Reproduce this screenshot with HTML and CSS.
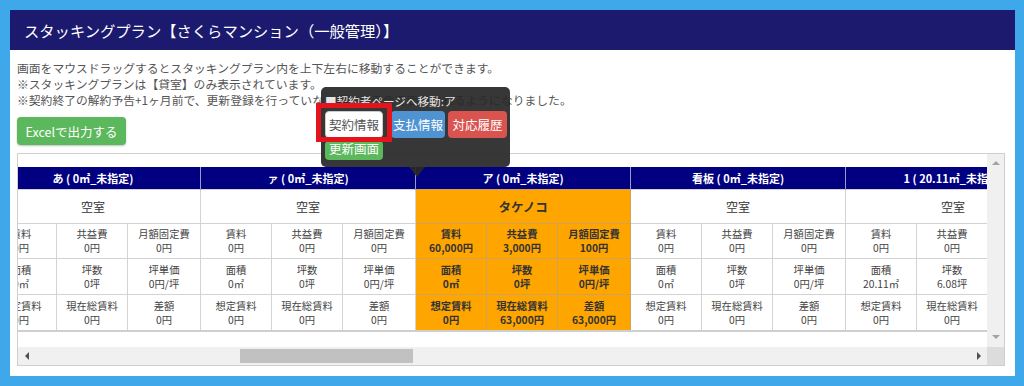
FILE: index.html
```html
<!DOCTYPE html>
<html lang="ja">
<head>
  <meta charset="UTF-8">
  <title>スタッキングプラン</title>
  <link rel="stylesheet" href="styles.css">
</head>
<body>
  <div class="panel">
    <div class="panel-head">スタッキングプラン【さくらマンション（一般管理）】</div>
    <div class="panel-body">
      <div class="notes">
        <p>画面をマウスドラッグするとスタッキングプラン内を上下左右に移動することができます。</p>
        <p>※スタッキングプランは【貸室】のみ表示されています。</p>
        <p>※契約終了の解約予告+1ヶ月前で、更新登録を行っていない契約は赤色で表示されるようになりました。</p>
      </div>
      <button class="excel-btn">Excelで出力する</button>

      <div class="plan-box">
        <div class="plan-view">
          <table class="plan">
            <colgroup>
              <col><col><col><col><col><col><col><col><col><col><col><col><col><col><col>
            </colgroup>
            <tr class="room-head">
              <th colspan="3">あ ( 0㎡_未指定)</th>
              <th colspan="3">ァ ( 0㎡_未指定)</th>
              <th colspan="3">ア ( 0㎡_未指定)</th>
              <th colspan="3">看板 ( 0㎡_未指定)</th>
              <th colspan="3">1 ( 20.11㎡_未指定)</th>
            </tr>
            <tr class="status-row">
              <td colspan="3">空室</td>
              <td colspan="3">空室</td>
              <td colspan="3" class="occupied tenant">タケノコ</td>
              <td colspan="3">空室</td>
              <td colspan="3">空室</td>
            </tr>
            <tr class="row-a">
              <td>賃料<br>0円</td><td>共益費<br>0円</td><td>月額固定費<br>0円</td>
              <td>賃料<br>0円</td><td>共益費<br>0円</td><td>月額固定費<br>0円</td>
              <td class="occupied">賃料<br>60,000円</td><td class="occupied">共益費<br>3,000円</td><td class="occupied">月額固定費<br>100円</td>
              <td>賃料<br>0円</td><td>共益費<br>0円</td><td>月額固定費<br>0円</td>
              <td>賃料<br>0円</td><td>共益費<br>0円</td><td>月額固定費<br>0円</td>
            </tr>
            <tr class="row-b">
              <td>面積<br>0㎡</td><td>坪数<br>0坪</td><td>坪単価<br>0円/坪</td>
              <td>面積<br>0㎡</td><td>坪数<br>0坪</td><td>坪単価<br>0円/坪</td>
              <td class="occupied">面積<br>0㎡</td><td class="occupied">坪数<br>0坪</td><td class="occupied">坪単価<br>0円/坪</td>
              <td>面積<br>0㎡</td><td>坪数<br>0坪</td><td>坪単価<br>0円/坪</td>
              <td>面積<br>20.11㎡</td><td>坪数<br>6.08坪</td><td>坪単価<br>0円/坪</td>
            </tr>
            <tr class="row-b">
              <td>想定賃料<br>0円</td><td>現在総賃料<br>0円</td><td>差額<br>0円</td>
              <td>想定賃料<br>0円</td><td>現在総賃料<br>0円</td><td>差額<br>0円</td>
              <td class="occupied">想定賃料<br>0円</td><td class="occupied">現在総賃料<br>63,000円</td><td class="occupied">差額<br>63,000円</td>
              <td>想定賃料<br>0円</td><td>現在総賃料<br>0円</td><td>差額<br>0円</td>
              <td>想定賃料<br>0円</td><td>現在総賃料<br>0円</td><td>差額<br>0円</td>
            </tr>
          </table>
        </div>
        <div class="vbar">
          <span class="arrow-up"></span>
          <span class="arrow-down"></span>
        </div>
        <div class="hbar">
          <span class="arrow-left"></span>
          <div class="htrack"><div class="hthumb"></div></div>
          <span class="arrow-right"></span>
        </div>
        <div class="corner"></div>
      </div>

      <div class="popover">
        <div class="popover-title">■契約者ページへ移動:ア</div>
        <div class="popover-btns">
          <button class="pbtn pbtn-default">契約情報</button>
          <button class="pbtn pbtn-info">支払情報</button>
          <button class="pbtn pbtn-danger">対応履歴</button>
          <button class="pbtn pbtn-success pbtn-xs">更新画面</button>
        </div>
        <span class="popover-arrow"></span>
      </div>
      <div class="highlight"></div>
    </div>
  </div>
</body>
</html>
```

FILE: styles.css
```css
html, body {
  margin: 0;
  height: 386px;
  overflow: hidden;
}
body {
  font-family: "Noto Sans CJK JP", sans-serif;
  background-color: #3EA8EA;
  padding: 10px 9px 10px 10px;
  box-sizing: border-box;
  color: #555;
}
.panel {
  background-color: #FFFFFF;
  height: 366px;
}
.panel-head {
  background-color: #1B1A6F;
  color: #FFFFFF;
  height: 40px;
  line-height: 40px;
  padding-left: 14px;
  font-size: 15.3px;
}
.panel-body {
  position: relative;
  padding: 10px 10px 0 7px;
}
.notes p {
  margin: 0;
  font-size: 11.8px;
  line-height: 16px;
  color: #555;
}
.excel-btn {
  display: block;
  margin-top: 9px;
  width: 109px;
  height: 28px;
  padding: 0;
  border: none;
  border-radius: 4px;
  background-color: #5CB85C;
  color: #FFFFFF;
  font-family: inherit;
  font-size: 12.5px;
  box-shadow: 0 1px 2px rgba(0, 0, 0, 0.25);
}

/* stacking plan box with its scrollbars */
.plan-box {
  margin-top: 8px;
  height: 213px;
  border: 1px solid #CFCFCF;
  box-sizing: border-box;
  display: grid;
  grid-template-columns: 1fr 17px;
  grid-template-rows: 1fr 18px;
}
.plan-view {
  overflow: hidden;
  padding-top: 13px;
}
.plan {
  margin-left: -33px;
  width: 1075px;
  table-layout: fixed;
  border-collapse: collapse;
  border-bottom: 2px solid #CFCFCF;
  text-align: center;
}
.plan col {
  width: 71px;
}
.plan col:nth-child(3n) {
  width: 73px;
}
.room-head th {
  height: 22px;
  padding: 0;
  background-color: #000080;
  color: #FFFFFF;
  font-size: 11px;
  font-weight: bold;
  border-left: 1px solid #9A9AC6;
}
.plan td {
  padding: 0;
  border: 1px solid #D3D3D3;
  font-size: 10.3px;
  line-height: 14px;
  color: #444;
}
.status-row td {
  height: 33px;
  font-size: 12px;
  color: #333;
}
.row-a td {
  height: 34px;
}
.row-b td {
  height: 35px;
}
.plan td.occupied {
  background-color: #FFA500;
  font-weight: bold;
  color: #333;
  border-color: #CDA25A;
}
.plan td.tenant {
  font-size: 12.5px;
}
.vbar {
  background-color: #F0F0F0;
  display: flex;
  flex-direction: column;
  justify-content: space-between;
  align-items: center;
  padding: 7px 0 8px;
}
.arrow-up {
  border-left: 4px solid transparent;
  border-right: 4px solid transparent;
  border-bottom: 4px solid #A3A3A3;
}
.arrow-down {
  border-left: 4px solid transparent;
  border-right: 4px solid transparent;
  border-top: 4px solid #A3A3A3;
}
.hbar {
  background-color: #F0F0F0;
  display: flex;
  align-items: center;
}
.arrow-left {
  margin: 0 5px 0 7px;
  border-top: 4px solid transparent;
  border-bottom: 4px solid transparent;
  border-right: 4px solid #505050;
}
.arrow-right {
  margin: 0 6px 0 5px;
  border-top: 4px solid transparent;
  border-bottom: 4px solid transparent;
  border-left: 4px solid #505050;
}
.htrack {
  flex: 1;
  height: 14px;
}
.hthumb {
  margin-left: 206px;
  width: 173px;
  height: 14px;
  background-color: #C1C1C1;
}
.corner {
  background-color: #DCDCDC;
}

/* popover over the selected room */
.popover {
  position: absolute;
  left: 311px;
  top: 37px;
  width: 189px;
  height: 80px;
  box-sizing: border-box;
  padding: 7px 3px 0 4px;
  border-radius: 5px;
  background-color: rgba(40, 40, 40, 0.93);
}
.popover-title {
  font-size: 11.6px;
  line-height: 14px;
  color: #E6E6E6;
}
.popover-btns {
  margin-top: 3px;
  display: flex;
  flex-wrap: wrap;
  column-gap: 3px;
  row-gap: 3px;
}
.pbtn {
  height: 27px;
  padding: 0;
  border: 1px solid transparent;
  border-radius: 4px;
  font-family: inherit;
  font-size: 12.5px;
  color: #FFFFFF;
}
.pbtn-default {
  width: 58px;
  margin-right: 5px;
  background-color: #FFFFFF;
  border-color: #CCCCCC;
  color: #555;
}
.pbtn-info {
  width: 54px;
  background-color: #4F93D2;
}
.pbtn-danger {
  width: 59px;
  background-color: #D9534F;
}
.pbtn-success {
  width: 58px;
  background-color: #5CB85C;
}
.pbtn-xs {
  height: 19px;
  line-height: 14px;
  padding-bottom: 4px;
}
.popover-arrow {
  position: absolute;
  left: 88px;
  top: 80px;
  border-left: 8px solid transparent;
  border-right: 8px solid transparent;
  border-top: 10px solid rgba(40, 40, 40, 0.93);
}
.highlight {
  position: absolute;
  left: 306px;
  top: 53px;
  width: 76px;
  height: 39px;
  box-sizing: border-box;
  border: 5px solid #E5131B;
}
```
